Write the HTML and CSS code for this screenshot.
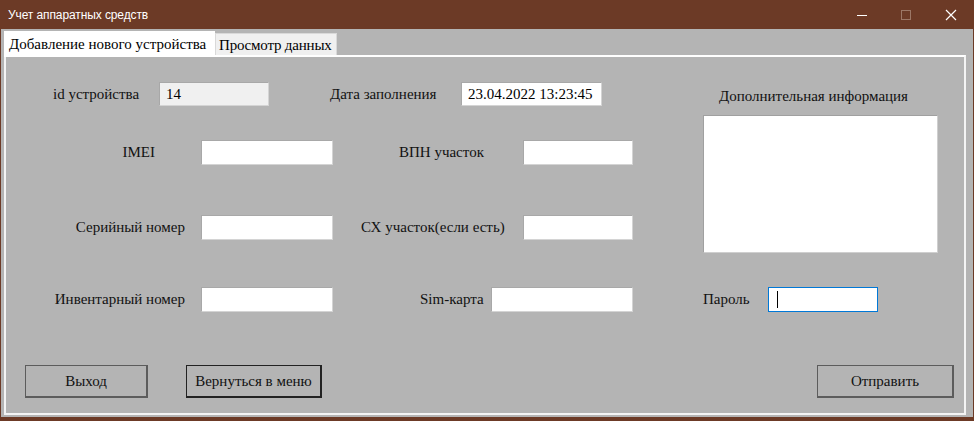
FILE: index.html
```html
<!DOCTYPE html>
<html lang="ru">
<head>
<meta charset="utf-8">
<title>Учет аппаратных средств</title>
<link rel="stylesheet" href="styles.css">
</head>
<body>
<div class="window">
  <div class="titlebar">
    <span class="title">Учет аппаратных средств</span>
    <div class="controls">
      <span class="ctl"><svg width="12" height="12" viewBox="0 0 12 12"><path d="M1 6.5h10" stroke="#fff" stroke-width="1"/></svg></span>
      <span class="ctl dim"><svg width="12" height="12" viewBox="0 0 12 12"><rect x="1.5" y="1.5" width="9" height="9" fill="none" stroke="#9c7766" stroke-width="1"/></svg></span>
      <span class="ctl"><svg width="12" height="12" viewBox="0 0 12 12"><path d="M1 1L11 11M11 1L1 11" stroke="#fff" stroke-width="1.2"/></svg></span>
    </div>
  </div>
  <div class="client">
    <div class="tabs">
      <div class="tab active">Добавление нового устройства</div>
      <div class="tab inactive">Просмотр данных</div>
    </div>
    <div class="page">
      <div class="form">
        <div class="left">
          <div class="row row1">
            <span class="lbl l-id">id устройства</span>
            <div class="field ro w110">14</div>
            <span class="lbl l-date">Дата заполнения</span>
            <div class="field w141">23.04.2022 13:23:45</div>
          </div>
          <div class="row row2">
            <span class="lbl la la-imei">IMEI</span>
            <div class="field w132"></div>
            <span class="lbl lb lb-vpn">ВПН участок</span>
            <div class="field w110"></div>
          </div>
          <div class="row row3">
            <span class="lbl la">Серийный номер</span>
            <div class="field w132"></div>
            <span class="lbl lb lb-sx">СХ участок(если есть)</span>
            <div class="field w110"></div>
          </div>
          <div class="row row4">
            <span class="lbl la">Инвентарный номер</span>
            <div class="field w132"></div>
            <span class="lbl lb lb-sim">Sim-карта</span>
            <div class="field w142"></div>
          </div>
        </div>
        <div class="right">
          <div class="info-lbl">Дополнительная информация</div>
          <div class="textarea"></div>
          <div class="row pass-row">
            <span class="lbl l-pass">Пароль</span>
            <div class="field w110 focus"><span class="caret"></span></div>
          </div>
        </div>
      </div>
      <div class="buttons">
        <div class="btn b-exit">Выход</div>
        <div class="btn b-menu">Вернуться в меню</div>
        <div class="btn b-send">Отправить</div>
      </div>
    </div>
  </div>
</div>
</body>
</html>
```

FILE: styles.css
```css
* { box-sizing: border-box; }
html, body { margin: 0; padding: 0; }
body {
  width: 974px;
  height: 421px;
  overflow: hidden;
  background: #b4b4b4;
}
.window {
  width: 974px;
  height: 421px;
  border-left: 1px solid #6c3a26;
  border-right: 1px solid #6c3a26;
  border-bottom: 4px solid #6c3a26;
  display: flex;
  flex-direction: column;
  background: #b4b4b4;
}
.titlebar {
  height: 29px;
  background: #6c3a26;
  display: flex;
  align-items: center;
  color: #fff;
  margin: 0 -1px;
}
.title {
  font-family: "Liberation Sans", Arial, sans-serif;
  font-size: 12px;
  padding-left: 8px;
  flex: 1;
  letter-spacing: -0.1px;
}
.controls { display: flex; height: 29px; }
.ctl {
  width: 44px;
  display: flex;
  align-items: center;
  justify-content: center;
}
.ctl:last-child { width: 46px; }
.client {
  flex: 1;
  display: flex;
  flex-direction: column;
  padding-left: 3px;
}
.tabs {
  height: 26px;
  display: flex;
  align-items: flex-end;
  font-family: "Liberation Serif", "Times New Roman", serif;
  font-size: 15px;
  color: #000;
}
.tab {
  white-space: nowrap;
  line-height: 1;
  display: flex;
  align-items: center;
}
.tab.inactive {
  height: 22px;
  width: 122px;
  padding: 2px 0 0 3px;
  background: #f0f0f0;
  border: 1px solid #d9d9d9;
  border-bottom: none;
  letter-spacing: -0.2px;
}
.tab.active {
  height: 26px;
  width: 211px;
  background: #fff;
  padding-left: 5px;
  padding-top: 1px;
  margin-bottom: -2px;
  position: relative;
  z-index: 1;
}
.page {
  width: 962px;
  height: 360px;
  border: 2px solid #f4f4f4;
  border-top-color: #fff;
  background: #b4b4b4;
  display: flex;
  flex-direction: column;
  font-family: "Liberation Serif", "Times New Roman", serif;
  font-size: 15px;
  color: #111;
}
.form {
  display: flex;
  padding-top: 25px;
}
.left { width: 627px; }
.row {
  display: flex;
  align-items: center;
}
.row1 { height: 24px; padding-left: 47px; }
.row2 { height: 25px; margin-top: 34px; }
.row3 { height: 25px; margin-top: 50px; }
.row4 { height: 25px; margin-top: 47px; }
.lbl { white-space: nowrap; line-height: 1; }
.l-id { width: 106px; }
.l-date { width: 131px; margin-left: 61px; }
.la { width: 195px; text-align: right; padding-right: 16px; }
.la-imei { padding-right: 46px; }
.lb { flex: 1; }
.lb-vpn { padding-left: 66px; }
.lb-sx { padding-left: 28px; }
.lb-sim { padding-left: 87px; }
.field {
  height: 100%;
  background: #fff;
  border: 1px solid #a8a8a8;
  border-right-color: #d4d4d4;
  border-bottom-color: #d4d4d4;
  display: flex;
  align-items: center;
  padding-left: 6px;
  font-size: 15px;
  color: #000;
  line-height: 1;
}
.field.ro { background: #f0f0f0; }
.w110 { width: 110px; }
.w132 { width: 132px; }
.w141 { width: 141px; }
.w142 { width: 142px; }
.right {
  margin-left: 70px;
  width: 235px;
  display: flex;
  flex-direction: column;
}
.info-lbl {
  height: 24px;
  padding-left: 16px;
  display: flex;
  align-items: center;
  padding-top: 4px;
  white-space: nowrap;
  line-height: 1;
}
.textarea {
  margin-top: 9px;
  height: 138px;
  background: #fff;
  border: 1px solid #a0a0a0;
  border-right-color: #cfcfcf;
  border-bottom-color: #cfcfcf;
}
.pass-row { height: 25px; margin-top: 34px; }
.l-pass { width: 65px; }
.field.focus { border: 1px solid #0078d7; padding-left: 8px; }
.caret {
  width: 1px;
  height: 17px;
  background: #000;
}
.buttons {
  display: flex;
  margin-top: 53px;
  padding-left: 19px;
  padding-right: 10px;
}
.btn {
  height: 33px;
  border: 2px solid #5c5c5c;
  border-top-width: 1px;
  border-left-width: 1px;
  display: flex;
  align-items: center;
  justify-content: center;
  white-space: nowrap;
  line-height: 1;
  color: #111;
}
.b-exit { width: 123px; }
.b-menu { width: 136px; margin-left: 38px; border-color: #222; border-width: 1px 2px 2px 1px; }
.b-send { width: 137px; margin-left: auto; }
```
